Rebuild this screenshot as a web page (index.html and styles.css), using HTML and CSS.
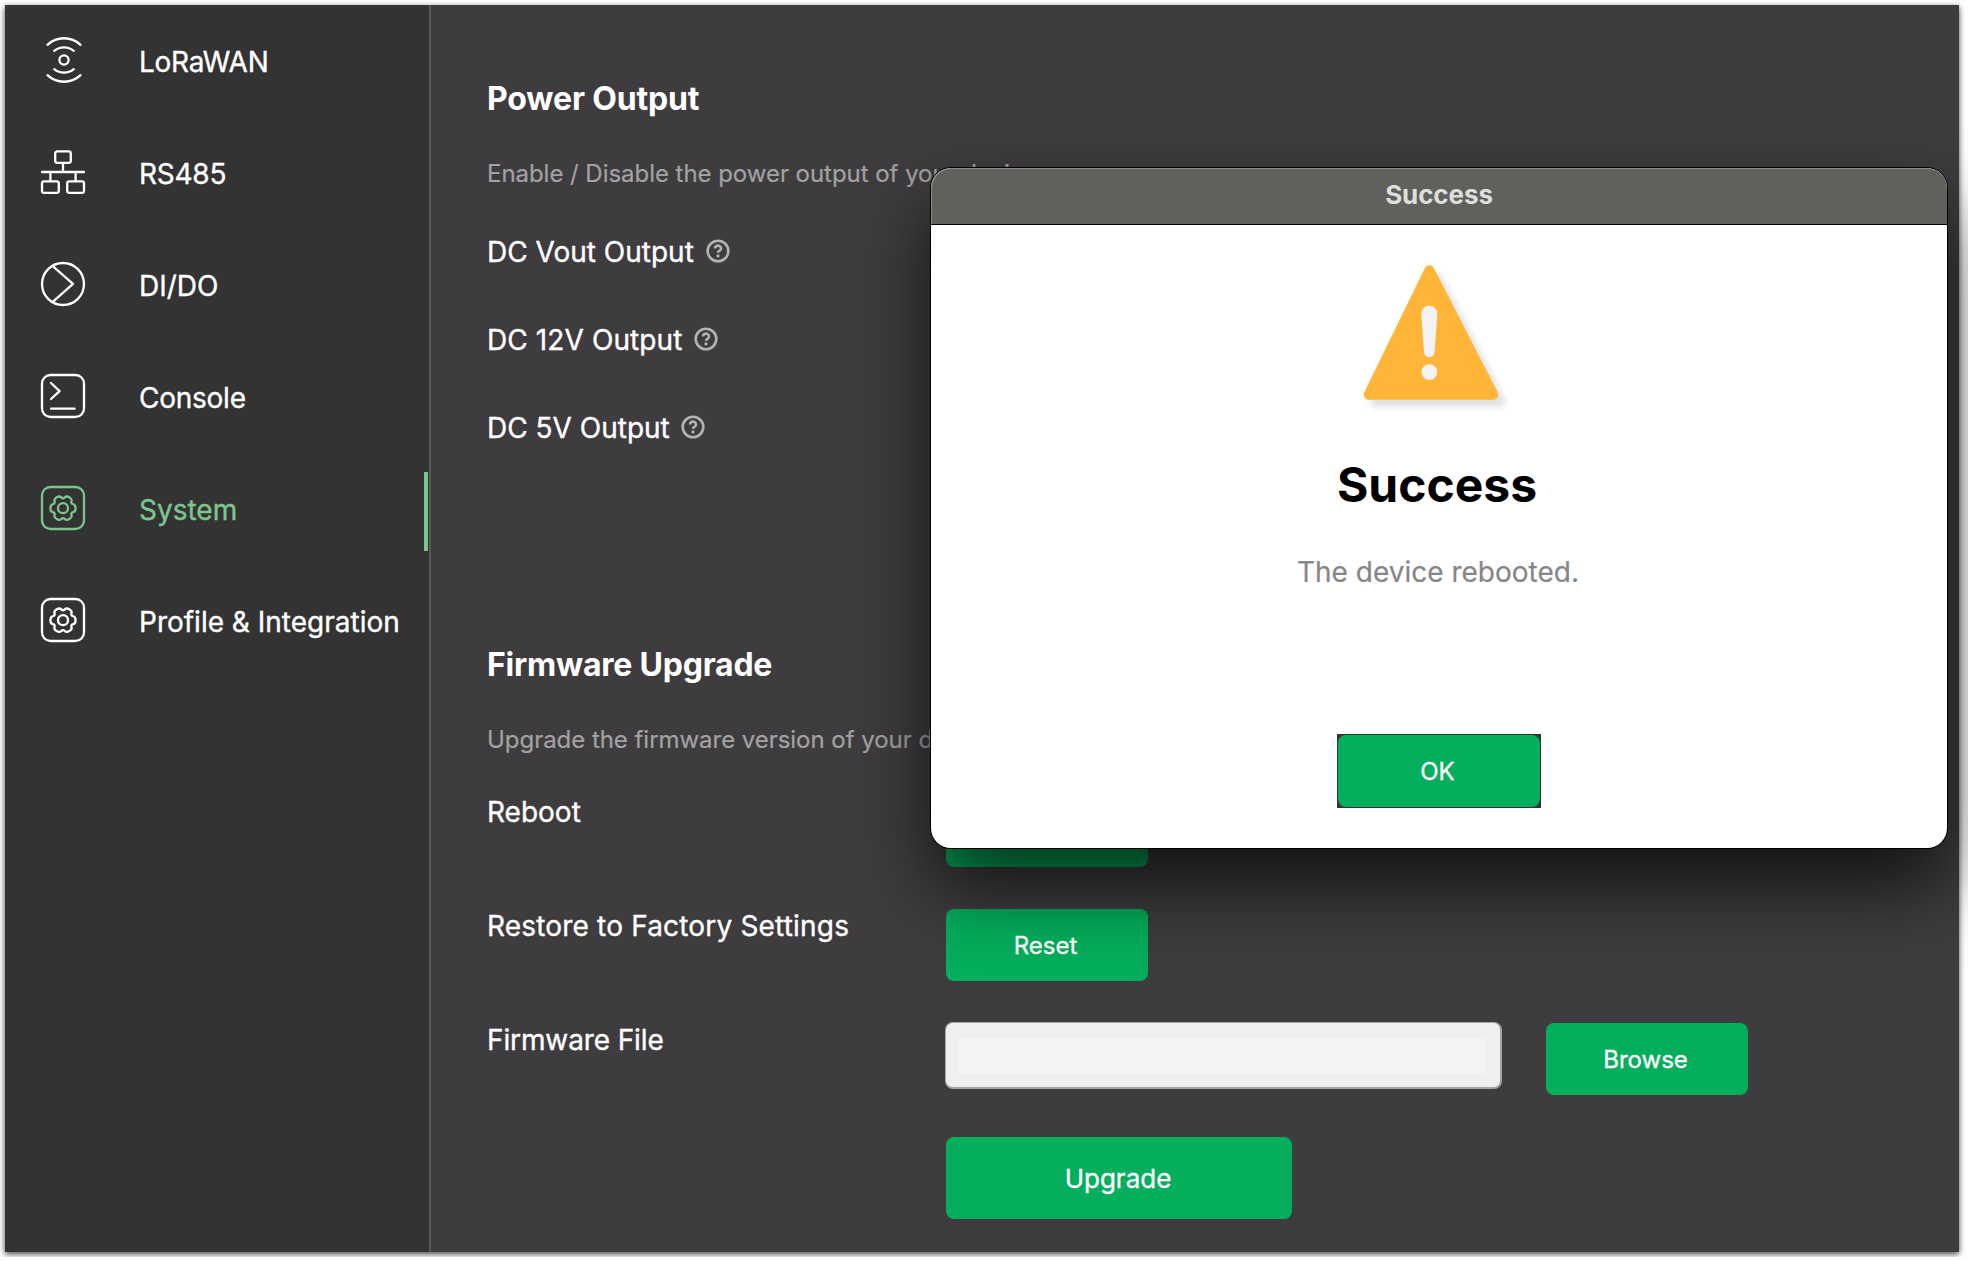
FILE: index.html
```html
<!DOCTYPE html>
<html lang="en">
<head>
<meta charset="utf-8">
<title>System</title>
<link rel="stylesheet" href="styles.css">
</head>
<body>
<svg class="sprite" width="0" height="0" aria-hidden="true">
  <symbol id="gear" viewBox="0 0 46 46">
    <rect x="2" y="2" width="42" height="42" rx="8.5"/>
    <g transform="translate(23 23.2)">
      <circle r="5"/>
      <path d="M12.6 0Q12.6 3.4 10.2 3.95Q7.8 4.5 8.5 6.85Q9.2 9.2 6.3 10.9Q3.4 12.6 1.7 10.8Q0 9-1.7 10.8Q-3.4 12.6-6.3 10.9Q-9.2 9.2-8.5 6.85Q-7.8 4.5-10.2 3.95Q-12.6 3.4-12.6 0Q-12.6-3.4-10.2-3.95Q-7.8-4.5-8.5-6.85Q-9.2-9.2-6.3-10.9Q-3.4-12.6-1.7-10.8Q0-9 1.7-10.8Q3.4-12.6 6.3-10.9Q9.2-9.2 8.5-6.85Q7.8-4.5 10.2-3.95Q12.6-3.4 12.6 0Z"/>
    </g>
  </symbol>
  <symbol id="help" viewBox="0 0 24 24">
    <circle cx="12" cy="12" r="10.3"/>
    <path d="M9 9.4a3 2.800 0 1 1 4.700 2.300c-1 .6-1.700 .9-1.700 2"/>
    <circle class="dot" cx="12" cy="16.900" r="1.600"/>
  </symbol>
</svg>
<div class="window">
  <nav class="sidebar">
    <a class="nav-item">
      <svg class="nav-icon" viewBox="0 0 46 46"><circle cx="24" cy="23" r="4.6"/><path d="M7.5 7.8A24 24 0 0 1 40.5 7.8M14.2 13.8A15.4 15.4 0 0 1 33.8 13.8M14.2 32.2A15.4 15.4 0 0 0 33.8 32.2M7.5 38.2A24 24 0 0 0 40.5 38.2"/></svg>
      <span class="nav-label tight">LoRaWAN</span>
    </a>
    <a class="nav-item">
      <svg class="nav-icon" viewBox="0 0 46 46"><rect x="15.2" y="2.4" width="15.6" height="11.4" rx="2"/><rect x="2" y="32.4" width="16.8" height="11.4" rx="2"/><rect x="27.2" y="32.4" width="16.8" height="11.4" rx="2"/><path d="M23 14V23M2 23H44M10.4 23V32M35.6 23V32"/></svg>
      <span class="nav-label tight">RS485</span>
    </a>
    <a class="nav-item">
      <svg class="nav-icon" viewBox="0 0 46 46"><circle cx="23" cy="23" r="21"/><path d="M13.3 5.7L33 22.9L13.3 40.3"/></svg>
      <span class="nav-label">DI/DO</span>
    </a>
    <a class="nav-item">
      <svg class="nav-icon" viewBox="0 0 46 46"><rect x="2" y="2" width="42" height="42" rx="8.5"/><path d="M11 10L19.6 18.1L11 26M11 35.7H34.6"/></svg>
      <span class="nav-label tight">Console</span>
    </a>
    <a class="nav-item active">
      <svg class="nav-icon"><use href="#gear"/></svg>
      <span class="nav-label">System</span>
    </a>
    <a class="nav-item">
      <svg class="nav-icon"><use href="#gear"/></svg>
      <span class="nav-label">Profile &amp; Integration</span>
    </a>
  </nav>
  <main class="content">
    <section class="power">
      <h2 class="title">Power Output</h2>
      <p class="desc">Enable / Disable the power output of your device.</p>
      <div class="switch-row"><span>DC Vout Output</span><svg class="help"><use href="#help"/></svg></div>
      <div class="switch-row"><span class="volt12">DC 12V Output</span><svg class="help"><use href="#help"/></svg></div>
      <div class="switch-row volt5"><span>DC 5V Output</span><svg class="help"><use href="#help"/></svg></div>
    </section>
    <section class="firmware">
      <h2 class="title">Firmware Upgrade</h2>
      <p class="desc">Upgrade the firmware version of your device.</p>
      <div class="form">
        <span class="label">Reboot</span><button class="btn">Reboot</button>
        <span class="label wide">Restore to Factory Settings</span><button class="btn">Reset</button>
        <span class="label snug">Firmware File</span>
        <div class="file"><div class="file-field"><div class="file-value"></div></div><button class="btn">Browse</button></div>
        <button class="btn btn-large">Upgrade</button>
      </div>
    </section>
  </main>
  <div class="dialog">
    <header class="dialog-bar">Success</header>
    <div class="dialog-body">
      <svg class="warning" viewBox="0 0 150 150">
        <path class="tri" d="M73.4 9.200L12.700 133.700H137.300Z"/>
        <path class="mark" d="M65.200 52.800a8.100 8.100 0 0 1 16.200 0L78.600 91a5.300 5.300 0 0 1-10.600 0Z"/>
        <circle class="mark" cx="73.300" cy="111.200" r="7.900"/>
      </svg>
      <h1 class="dialog-title">Success</h1>
      <p class="dialog-text">The device rebooted.</p>
      <div class="ok-frame"><button class="btn ok">OK</button></div>
    </div>
  </div>
</div>
</body>
</html>
```
FILE: styles.css
```css
* { box-sizing: border-box; }
body {
  margin: 0;
  background: #fff;
  font-family: Inter, "Liberation Sans", sans-serif;
  overflow: hidden;
}
h1, h2, p { margin: 0; }
.sprite { position: absolute; }
.window {
  position: relative;
  display: flex;
  width: 1954px;
  height: 1247px;
  margin: 5px;
  background: #3f3c3f;
  box-shadow: 0 2px 6px rgba(0, 0, 0, .75);
}
.sidebar {
  width: 426px;
  flex: none;
  padding-top: 1px;
  background: #333;
  border-right: 2px solid #595655;
}
.nav-item {
  position: relative;
  display: flex;
  align-items: center;
  gap: 53px;
  height: 112px;
  padding-left: 35px;
  color: #fff;
  font-size: 28px;
  white-space: nowrap;
}
.nav-label, .switch-row, .label, .btn { -webkit-text-stroke: .35px currentColor; }
.tight { letter-spacing: -.25px; }
.nav-icon {
  width: 46px;
  height: 46px;
  flex: none;
  margin-bottom: 4px;
  fill: none;
  stroke: currentColor;
  stroke-width: 2.3;
  stroke-linecap: round;
  stroke-linejoin: round;
}
.active { color: #7bc68d; }
.active::after {
  content: "";
  position: absolute;
  right: 1px;
  top: 18px;
  width: 4px;
  height: 79px;
  background: #7bc68d;
}
.content {
  flex: 1;
  padding: 74px 0 0 56px;
  color: #fff;
}
.power { height: 566px; }
.title {
  font-size: 32px;
  line-height: 40px;
  font-weight: 700;
  letter-spacing: -.15px;
}
.firmware .title { letter-spacing: -.22px; }
.desc {
  margin-top: 40px;
  font-size: 24px;
  line-height: 30px;
  letter-spacing: -.04px;
  color: #a3a2a3;
  -webkit-text-stroke: .2px currentColor;
}
.switch-row {
  display: flex;
  align-items: center;
  gap: 12px;
  height: 88px;
  font-size: 28px;
}
.volt12 { letter-spacing: .1px; }
.volt5 { gap: 11px; }
.power .desc { margin-bottom: 19px; }
.help {
  width: 24px;
  height: 24px;
  margin-bottom: 2px;
  fill: none;
  stroke: #b5b3b1;
  stroke-width: 2.6;
}
.dot { fill: #b5b3b1; stroke: none; }
.form {
  display: grid;
  grid-template-columns: 459px auto;
  grid-auto-rows: 114px;
  justify-content: start;
  align-items: start;
  margin-top: 40px;
}
.label { font-size: 28px; line-height: 34px; }
.wide { letter-spacing: .18px; }
.snug { letter-spacing: -.12px; }
.btn {
  width: 202px;
  height: 72px;
  padding: 1px 3px 0 0;
  border: 0;
  border-radius: 8px;
  background: #04ae5c;
  color: #fff;
  font: 24px/30px Inter, "Liberation Sans", sans-serif;
}
.btn-large { grid-column: 2; width: 346px; height: 82px; padding-right: 2px; font-size: 26px; }
.file { display: flex; gap: 44px; margin-left: -1px; }
.file-field {
  width: 557px;
  height: 67px;
  margin-top: -1px;
  padding: 15px 14px 14px 13px;
  border: solid #a5a3a3;
  border-width: 1px 2px 2px 1px;
  border-radius: 8px;
  background: #efefef;
}
.file-value { height: 36px; background: #f3f3f3; }
.dialog {
  position: absolute;
  left: 926px;
  top: 163px;
  width: 1016px;
  height: 680px;
  border-radius: 20px;
  overflow: hidden;
  background: #fff;
  box-shadow: 0 0 0 1px #000, 0 38px 76px rgba(0, 0, 0, .7);
}
.dialog-bar {
  height: 57px;
  border-bottom: 1px solid #000;
  border-radius: 20px 20px 0 0;
  background: #60605c;
  box-shadow: inset 1px 1px 0 #8c8c89;
  color: #dededc;
  font-size: 26px;
  line-height: 53px;
  font-weight: 700;
  letter-spacing: -.1px;
  text-align: center;
}
.dialog-body {
  display: flex;
  flex-direction: column;
  align-items: center;
}
.warning { width: 150px; height: 150px; margin: 36px 16px 0 0; overflow: visible; }
.tri {
  fill: #ffb537;
  stroke: #ffb537;
  stroke-width: 10;
  stroke-linejoin: round;
  filter: drop-shadow(7px 7px 3px rgba(0, 0, 0, .12));
}
.mark { fill: #f4f3f3; }
.dialog-title { margin: 44px 4px 0 0; font-size: 48px; line-height: 60px; color: #000; }
.dialog-text {
  margin: 40px 2px 0 0;
  font-size: 28px;
  line-height: 34px;
  color: #868686;
  -webkit-text-stroke: .2px currentColor;
}
.ok-frame { margin-top: 145px; padding: 1px; background: #333; }
.ok { display: block; }
```
